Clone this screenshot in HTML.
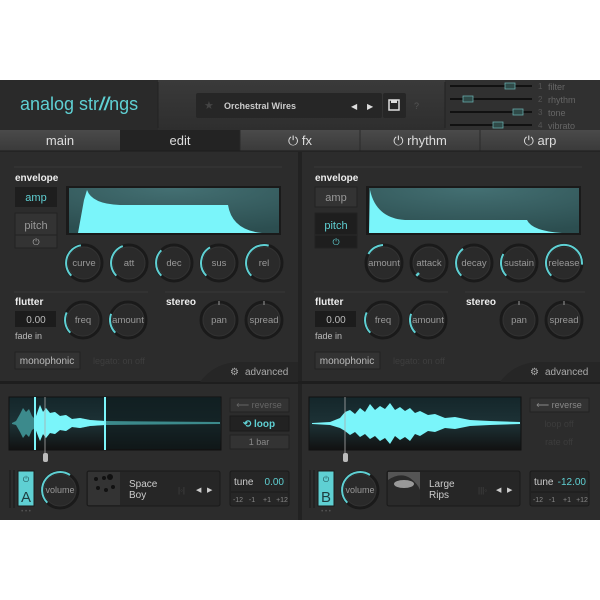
<!DOCTYPE html>
<html><head><meta charset="utf-8"><style>
html,body{margin:0;padding:0;background:#fff;width:600px;height:600px;overflow:hidden}
svg{display:block}
text{font-family:"Liberation Sans",sans-serif}
</style></head><body>
<svg width="600" height="600" viewBox="0 0 600 600" xmlns="http://www.w3.org/2000/svg">
<defs>
<linearGradient id="hdr" x1="0" y1="0" x2="0" y2="1"><stop offset="0" stop-color="#3a3a3a"/><stop offset="1" stop-color="#2e2e2e"/></linearGradient>
<linearGradient id="tab" x1="0" y1="0" x2="0" y2="1"><stop offset="0" stop-color="#4a4a4a"/><stop offset="1" stop-color="#3a3a3a"/></linearGradient>
<radialGradient id="disp" cx="0.5" cy="0" r="1"><stop offset="0" stop-color="#447073"/><stop offset="1" stop-color="#2c4e50"/></radialGradient>
<linearGradient id="wave" x1="0" y1="0" x2="0" y2="1"><stop offset="0" stop-color="#14262a"/><stop offset="0.5" stop-color="#1d3236"/><stop offset="1" stop-color="#111"/></linearGradient>
<g id="knob"><circle r="18" fill="#2a2a2a" stroke="#1a1a1a" stroke-width="3"/><circle r="16" fill="none" stroke="#333" stroke-width="1"/></g>
</defs>
<rect x="0" y="80" width="600" height="440" fill="#2b2b2b"/>
<!-- header -->
<rect x="0" y="80" width="600" height="50" fill="url(#hdr)"/>
<rect x="0" y="80" width="158" height="50" fill="#2a2a2a"/>
<rect x="445" y="80" width="155" height="50" fill="#303030"/>
<line x1="158" y1="82" x2="158" y2="128" stroke="#222"/>
<line x1="445" y1="82" x2="445" y2="128" stroke="#222"/>
<text x="20" y="110" font-size="18" fill="#5fd0d3">analog str<tspan font-weight="bold" font-style="italic">//</tspan>ngs</text>
<rect x="196" y="93" width="186" height="25" rx="2" fill="#262626"/>
<text x="204" y="109" font-size="11" fill="#444">★</text>
<text x="224" y="109" font-size="9" font-weight="bold" fill="#ccc">Orchestral Wires</text>
<text x="351" y="109" font-size="8" fill="#ddd">◀</text><text x="367" y="109" font-size="8" fill="#ddd">▶</text>
<rect x="383" y="93" width="23" height="25" rx="2" fill="#262626"/>
<rect x="389" y="100" width="10" height="10" fill="none" stroke="#ddd" stroke-width="1.5"/><rect x="391" y="100" width="6" height="3" fill="#ddd"/>
<text x="414" y="109" font-size="9" fill="#555">?</text>
<g stroke="#111" stroke-width="2">
<line x1="450" y1="86" x2="532" y2="86"/><line x1="450" y1="99" x2="532" y2="99"/><line x1="450" y1="112" x2="532" y2="112"/><line x1="450" y1="125" x2="532" y2="125"/></g>
<g fill="#2f4a48" stroke="#6aa" stroke-width="0.8">
<rect x="505" y="83" width="10" height="6"/><rect x="463" y="96" width="10" height="6"/><rect x="513" y="109" width="10" height="6"/><rect x="493" y="122" width="10" height="6"/></g>
<g font-size="8" fill="#555"><text x="538" y="89">1</text><text x="538" y="102">2</text><text x="538" y="115">3</text><text x="538" y="128">4</text></g>
<g font-size="9" fill="#666"><text x="548" y="90">filter</text><text x="548" y="103">rhythm</text><text x="548" y="116">tone</text><text x="548" y="129">vibrato</text></g>
<!-- tabs -->
<rect x="0" y="130" width="600" height="21" fill="url(#tab)"/>
<rect x="120" y="130" width="120" height="21" fill="#232323"/>
<g stroke="#2a2a2a"><line x1="360" y1="130" x2="360" y2="151"/><line x1="480" y1="130" x2="480" y2="151"/><line x1="240" y1="130" x2="240" y2="151"/></g>
<g font-size="13" fill="#ddd" text-anchor="middle">
<text x="60" y="145">main</text><text x="180" y="145">edit</text><text x="300" y="145">⏻ fx</text><text x="420" y="145">⏻ rhythm</text><text x="540" y="145">⏻ arp</text></g>
<line x1="0" y1="151" x2="600" y2="151" stroke="#1c1c1c"/>
<!-- panels -->
<rect x="0" y="152" width="298" height="230" fill="#2c2c2c"/>
<rect x="302" y="152" width="298" height="230" fill="#2c2c2c"/>
<rect x="298" y="152" width="4" height="368" fill="#222"/>
<rect x="0" y="381" width="600" height="3" fill="#1e1e1e"/>
<line x1="14" y1="167" x2="282" y2="167" stroke="#393939"/>
<line x1="314" y1="167" x2="582" y2="167" stroke="#393939"/>
<line x1="14" y1="292" x2="148" y2="292" stroke="#393939"/><line x1="165" y1="292" x2="285" y2="292" stroke="#393939"/>
<line x1="314" y1="292" x2="448" y2="292" stroke="#393939"/><line x1="465" y1="292" x2="585" y2="292" stroke="#393939"/>
<path d="M200 382 Q215 362 240 362 L298 362 L298 382 Z" fill="#262626"/>
<path d="M500 382 Q515 362 540 362 L600 362 L600 382 Z" fill="#262626"/>
<g font-size="10" fill="#aaa"><text x="230" y="375">⚙</text><text x="245" y="375">advanced</text><text x="530" y="375">⚙</text><text x="545" y="375">advanced</text></g>

<!-- LEFT TOP -->
<g font-size="10" font-weight="bold" fill="#eee"><text x="15" y="181">envelope</text><text x="15" y="305">flutter</text><text x="166" y="305">stereo</text>
<text x="315" y="181">envelope</text><text x="315" y="305">flutter</text><text x="466" y="305">stereo</text></g>
<rect x="15" y="187" width="42" height="20" fill="#1e1e1e"/><text x="36" y="201" font-size="11" fill="#5fd0d3" text-anchor="middle">amp</text>
<rect x="15" y="213" width="42" height="35" fill="#333" stroke="#222"/><line x1="15" y1="235" x2="57" y2="235" stroke="#222"/>
<text x="36" y="229" font-size="11" fill="#999" text-anchor="middle">pitch</text><text x="36" y="245" font-size="9" fill="#aaa" text-anchor="middle">⏻</text>
<rect x="66" y="186" width="215" height="49" fill="#1a1a1a"/><rect x="69" y="188" width="210" height="45" fill="url(#disp)"/>
<path d="M78 233 L84 200 L87 190 Q92 204 120 205 L228 205 Q232 230 262 233 Z" fill="#7af5fa"/>
<g transform="translate(84,263)"><use href="#knob"/><path d="M-12.7 12.7 A18 18 0 0 1 -3.1 -17.7" stroke="#5fd0d3" stroke-width="2" fill="none"/></g>
<g transform="translate(129,263)"><use href="#knob"/><path d="M-12.7 12.7 A18 18 0 0 1 -6.2 -16.9" stroke="#5fd0d3" stroke-width="2" fill="none"/></g>
<g transform="translate(174,263)"><use href="#knob"/><path d="M-12.7 12.7 A18 18 0 0 1 -12.7 -12.7" stroke="#5fd0d3" stroke-width="2" fill="none"/></g>
<g transform="translate(219,263)"><use href="#knob"/><path d="M-12.7 12.7 A18 18 0 0 1 -9 -15.6" stroke="#5fd0d3" stroke-width="2" fill="none"/></g>
<g transform="translate(264,263)"><use href="#knob"/><path d="M-12.7 12.7 A18 18 0 0 1 4.7 -17.4" stroke="#5fd0d3" stroke-width="2" fill="none"/></g>
<g font-size="9.5" fill="#999" text-anchor="middle"><text x="84" y="266">curve</text><text x="129" y="266">att</text><text x="174" y="266">dec</text><text x="219" y="266">sus</text><text x="264" y="266">rel</text></g>
<rect x="15" y="311" width="41" height="16" fill="#1c1c1c"/><text x="36" y="323" font-size="10" fill="#bbb" text-anchor="middle">0.00</text>
<text x="15" y="339" font-size="9" fill="#bbb">fade in</text>
<g transform="translate(83,320)"><use href="#knob"/><path d="M-12.7 12.7 A18 18 0 0 1 -16.3 -7.6" stroke="#5fd0d3" stroke-width="2" fill="none"/></g>
<g transform="translate(128,320)"><use href="#knob"/><path d="M-12.7 12.7 A18 18 0 0 1 -16.9 -6.2" stroke="#5fd0d3" stroke-width="2" fill="none"/></g>
<g transform="translate(219,320)"><use href="#knob"/><line x1="0" y1="-19" x2="0" y2="-15" stroke="#999"/></g>
<g transform="translate(264,320)"><use href="#knob"/><line x1="0" y1="-19" x2="0" y2="-15" stroke="#999"/></g>
<g font-size="9.5" fill="#999" text-anchor="middle"><text x="83" y="323">freq</text><text x="128" y="323">amount</text><text x="219" y="323">pan</text><text x="264" y="323">spread</text></g>
<rect x="15" y="352" width="65" height="17" fill="#333" stroke="#222"/><text x="47" y="364" font-size="10" fill="#bbb" text-anchor="middle">monophonic</text>
<text x="93" y="364" font-size="9" fill="#3e3e3e">legato: on off</text>

<!-- RIGHT TOP -->
<rect x="315" y="187" width="42" height="20" fill="#333" stroke="#222"/><text x="336" y="201" font-size="11" fill="#999" text-anchor="middle">amp</text>
<rect x="315" y="213" width="42" height="35" fill="#1e1e1e" stroke="#222"/><line x1="315" y1="235" x2="357" y2="235" stroke="#2a2a2a"/>
<text x="336" y="229" font-size="11" fill="#5fd0d3" text-anchor="middle">pitch</text><text x="336" y="245" font-size="9" fill="#5fd0d3" text-anchor="middle">⏻</text>
<rect x="366" y="186" width="215" height="49" fill="#1a1a1a"/><rect x="369" y="188" width="210" height="45" fill="url(#disp)"/>
<path d="M369 233 L370 190 Q376 218 405 220 L527 220 Q532 231 562 233 Z" fill="#7af5fa"/>
<g transform="translate(384,263)"><use href="#knob"/><path d="M-15.6 -9 A18 18 0 0 1 -1 -18" stroke="#5fd0d3" stroke-width="2" fill="none"/></g>
<g transform="translate(429,263)"><use href="#knob"/><path d="M-12.7 12.7 L-10 10" stroke="#5fd0d3" stroke-width="2.5" fill="none"/></g>
<g transform="translate(474,263)"><use href="#knob"/><path d="M-12.7 12.7 A18 18 0 0 1 -11 -14.2" stroke="#5fd0d3" stroke-width="2" fill="none"/></g>
<g transform="translate(519,263)"><use href="#knob"/><path d="M-12.7 12.7 A18 18 0 0 1 -15.6 -9" stroke="#5fd0d3" stroke-width="2" fill="none"/></g>
<g transform="translate(564,263)"><use href="#knob"/><path d="M-12.7 12.7 A18 18 0 1 1 17.9 1.6" stroke="#5fd0d3" stroke-width="2" fill="none"/></g>
<g font-size="9.5" fill="#999" text-anchor="middle"><text x="384" y="266">amount</text><text x="429" y="266">attack</text><text x="474" y="266">decay</text><text x="519" y="266">sustain</text><text x="564" y="266">release</text></g>
<rect x="315" y="311" width="41" height="16" fill="#1c1c1c"/><text x="336" y="323" font-size="10" fill="#bbb" text-anchor="middle">0.00</text>
<text x="315" y="339" font-size="9" fill="#bbb">fade in</text>
<g transform="translate(383,320)"><use href="#knob"/><path d="M-12.7 12.7 A18 18 0 0 1 -16.3 -7.6" stroke="#5fd0d3" stroke-width="2" fill="none"/></g>
<g transform="translate(428,320)"><use href="#knob"/><path d="M-12.7 12.7 A18 18 0 0 1 -16.9 -6.2" stroke="#5fd0d3" stroke-width="2" fill="none"/></g>
<g transform="translate(519,320)"><use href="#knob"/><line x1="0" y1="-19" x2="0" y2="-15" stroke="#999"/></g>
<g transform="translate(564,320)"><use href="#knob"/><line x1="0" y1="-19" x2="0" y2="-15" stroke="#999"/></g>
<g font-size="9.5" fill="#999" text-anchor="middle"><text x="383" y="323">freq</text><text x="428" y="323">amount</text><text x="519" y="323">pan</text><text x="564" y="323">spread</text></g>
<rect x="315" y="352" width="65" height="17" fill="#333" stroke="#222"/><text x="347" y="364" font-size="10" fill="#bbb" text-anchor="middle">monophonic</text>
<text x="393" y="364" font-size="9" fill="#3e3e3e">legato: on off</text>

<!-- BOTTOM LEFT -->
<rect x="0" y="384" width="298" height="136" fill="#2c2c2c"/><rect x="302" y="384" width="298" height="136" fill="#2c2c2c"/>
<rect x="9" y="397" width="212" height="53" fill="url(#wave)" stroke="#111"/>
<rect x="106" y="398" width="114" height="51" fill="#0f1a1c" opacity="0.6"/>
<path d="M12 423 L16 421 L20 414 L23 408 L26 412 L29 409 L32 416 L35 419 L40 405 L43 412 L46 408 L50 413 L55 412 L60 416 L66 415 L72 419 L80 418 L90 420 L105 421 L220 422 L220 424 L105 425 L90 426 L80 428 L72 427 L66 431 L60 430 L55 434 L50 433 L46 438 L43 434 L40 441 L35 428 L32 430 L29 437 L26 434 L23 438 L20 432 L16 425 L12 424Z" fill="#3c8a8c"/>
<path d="M35 419 L40 405 L43 412 L46 408 L50 413 L55 412 L60 416 L66 415 L72 419 L80 418 L90 420 L105 421 L105 425 L90 426 L80 428 L72 427 L66 431 L60 430 L55 434 L50 433 L46 438 L43 434 L40 441 L35 428Z" fill="#7af5fa"/>
<rect x="34" y="397" width="2" height="53" fill="#7af5fa"/><rect x="104" y="397" width="2" height="53" fill="#7af5fa"/>
<line x1="45" y1="397" x2="45" y2="455" stroke="#aaa" stroke-width="0.8"/><rect x="43" y="453" width="5" height="9" rx="2" fill="#bbb"/>
<rect x="230" y="398" width="59" height="14" fill="#333" stroke="#222"/><text x="259" y="408" font-size="9" fill="#666" text-anchor="middle">⟵ reverse</text>
<rect x="230" y="416" width="59" height="15" fill="#222" stroke="#1a1a1a"/><text x="259" y="427" font-size="10" font-weight="bold" fill="#5fd0d3" text-anchor="middle">⟲ loop</text>
<rect x="230" y="435" width="59" height="14" fill="#333" stroke="#222"/><text x="259" y="445" font-size="9" fill="#888" text-anchor="middle">1 bar</text>
<rect x="9" y="470" width="2" height="38" fill="#222"/><rect x="13" y="470" width="2" height="38" fill="#222"/>
<rect x="18" y="471" width="16" height="35" fill="#5fd0d3" stroke="#1a1a1a"/><text x="26" y="482" font-size="8" fill="#1e4c50" text-anchor="middle">⏻</text><text x="26" y="502" font-size="15" fill="#1e3e40" text-anchor="middle">A</text>
<text x="26" y="513" font-size="6" fill="#555" text-anchor="middle">• • •</text>
<g transform="translate(60,490)"><use href="#knob"/><path d="M-12.7 12.7 A18 18 0 0 1 10 -15" stroke="#5fd0d3" stroke-width="2" fill="none"/></g>
<text x="60" y="493" font-size="9" fill="#999" text-anchor="middle">volume</text>
<rect x="87" y="471" width="133" height="35" rx="2" fill="#262626" stroke="#1a1a1a"/>
<rect x="88" y="472" width="32" height="33" fill="#333"/><g fill="#111"><circle cx="96" cy="479" r="2"/><circle cx="104" cy="478" r="2"/><circle cx="110" cy="477" r="3"/><circle cx="98" cy="488" r="2"/><circle cx="106" cy="490" r="2"/><circle cx="113" cy="487" r="2"/></g>
<text x="129" y="487" font-size="10" fill="#ccc">Space</text><text x="129" y="498" font-size="10" fill="#ccc">Boy</text>
<text x="178" y="493" font-size="8" fill="#444">|◦|</text><text x="196" y="492" font-size="7" fill="#ccc">◀</text><text x="207" y="492" font-size="7" fill="#ccc">▶</text>
<rect x="230" y="471" width="59" height="35" rx="2" fill="#262626" stroke="#1a1a1a"/>
<text x="234" y="485" font-size="10" fill="#ccc">tune</text><text x="284" y="485" font-size="10" fill="#5fd0d3" text-anchor="end">0.00</text>
<line x1="231" y1="492" x2="288" y2="492" stroke="#1a1a1a"/>
<g font-size="7" fill="#888" text-anchor="middle"><text x="238" y="502">-12</text><text x="252" y="502">-1</text><text x="267" y="502">+1</text><text x="282" y="502">+12</text></g>

<!-- BOTTOM RIGHT -->
<rect x="309" y="397" width="212" height="53" fill="url(#wave)" stroke="#111"/>
<path d="M312 423 L330 422 L340 418 L345 412 L350 410 L355 414 L360 408 L365 412 L370 404 L375 410 L380 406 L385 409 L390 403 L395 410 L400 407 L405 411 L410 408 L415 413 L420 411 L428 415 L435 414 L445 418 L455 417 L470 420 L490 421 L520 422 L520 424 L490 425 L470 426 L455 429 L445 428 L435 432 L428 431 L420 436 L415 434 L410 441 L405 437 L400 440 L395 436 L390 444 L385 438 L380 441 L375 436 L370 439 L365 434 L360 437 L355 432 L350 435 L345 431 L340 428 L330 425 L312 424Z" fill="#7af5fa"/>
<line x1="345" y1="397" x2="345" y2="455" stroke="#aaa" stroke-width="0.8"/><rect x="343" y="453" width="5" height="9" rx="2" fill="#bbb"/>
<rect x="530" y="398" width="59" height="14" fill="#333" stroke="#222"/><text x="559" y="408" font-size="9" fill="#888" text-anchor="middle">⟵ reverse</text>
<text x="559" y="427" font-size="9" fill="#3c3c3c" text-anchor="middle">loop off</text>
<text x="559" y="445" font-size="9" fill="#3c3c3c" text-anchor="middle">rate off</text>
<rect x="309" y="470" width="2" height="38" fill="#222"/><rect x="313" y="470" width="2" height="38" fill="#222"/>
<rect x="318" y="471" width="16" height="35" fill="#5fd0d3" stroke="#1a1a1a"/><text x="326" y="482" font-size="8" fill="#1e4c50" text-anchor="middle">⏻</text><text x="326" y="502" font-size="15" fill="#1e3e40" text-anchor="middle">B</text>
<text x="326" y="513" font-size="6" fill="#555" text-anchor="middle">• • •</text>
<g transform="translate(360,490)"><use href="#knob"/><path d="M-12.7 12.7 A18 18 0 0 1 10 -15" stroke="#5fd0d3" stroke-width="2" fill="none"/></g>
<text x="360" y="493" font-size="9" fill="#999" text-anchor="middle">volume</text>
<rect x="387" y="471" width="133" height="35" rx="2" fill="#262626" stroke="#1a1a1a"/>
<rect x="388" y="472" width="32" height="33" fill="#555"/><path d="M388 480 Q400 472 410 478 Q418 484 420 490 L420 505 L388 505Z" fill="#2a2a2a"/><ellipse cx="404" cy="484" rx="10" ry="4" fill="#999"/>
<text x="429" y="487" font-size="10" fill="#ccc">Large</text><text x="429" y="498" font-size="10" fill="#ccc">Rips</text>
<text x="478" y="493" font-size="8" fill="#444">|||◦</text><text x="496" y="492" font-size="7" fill="#ccc">◀</text><text x="507" y="492" font-size="7" fill="#ccc">▶</text>
<rect x="530" y="471" width="59" height="35" rx="2" fill="#262626" stroke="#1a1a1a"/>
<text x="534" y="485" font-size="10" fill="#ccc">tune</text><text x="586" y="485" font-size="10" fill="#5fd0d3" text-anchor="end">-12.00</text>
<line x1="531" y1="492" x2="588" y2="492" stroke="#1a1a1a"/>
<g font-size="7" fill="#888" text-anchor="middle"><text x="538" y="502">-12</text><text x="552" y="502">-1</text><text x="567" y="502">+1</text><text x="582" y="502">+12</text></g>
</svg>
</body></html>
